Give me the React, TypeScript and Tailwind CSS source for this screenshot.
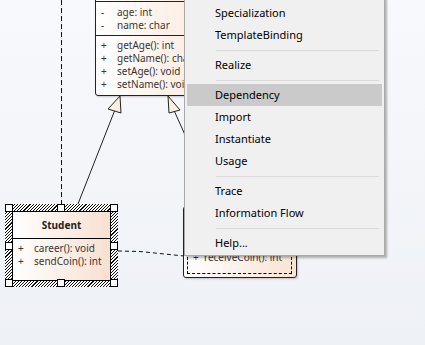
import React from 'react';

const font = "font-['Noto_Sans',sans-serif]";

type Item = { label: string; active?: boolean } | 'sep';

const menuItems: Item[] = [
  { label: 'Specialization' },
  { label: 'TemplateBinding' },
  'sep',
  { label: 'Realize' },
  'sep',
  { label: 'Dependency', active: true },
  { label: 'Import' },
  { label: 'Instantiate' },
  { label: 'Usage' },
  'sep',
  { label: 'Trace' },
  { label: 'Information Flow' },
  'sep',
  { label: 'Help...' },
];

const Row = ({ sign, text, w = 'w-[21px]' }: { sign: string; text: string; w?: string }) => (
  <div className="flex h-[13px] items-center whitespace-nowrap">
    <span className={`${w} pl-[5px]`}>{sign}</span>
    <span>{text}</span>
  </div>
);

const Handle = ({ className }: { className: string }) => (
  <div className={`absolute h-[8px] w-[8px] border border-black bg-white ${className}`} />
);

const Connectors = () => (
  <svg className="absolute inset-0" width="425" height="345" viewBox="0 0 425 345">
    {/* dependency from above */}
    <line x1="61.5" y1="0" x2="61.5" y2="204" stroke="#111" strokeWidth="1" strokeDasharray="5 3" />
    {/* generalization Student -> parent */}
    <line x1="76" y1="209" x2="114.5" y2="111" stroke="#222" strokeWidth="1" />
    <polygon points="120,96 108,109 121,113" fill="#fcefe2" stroke="#222" strokeWidth="1" />
    {/* second generalization */}
    <line x1="174.5" y1="111.5" x2="190" y2="146" stroke="#222" strokeWidth="1" />
    <polygon points="168,96 169,113 180,110" fill="#fcefe2" stroke="#222" strokeWidth="1" />
    {/* dashed link to receiveCoin class */}
    <polyline points="118,251 140,251.5 184,256" fill="none" stroke="#111" strokeWidth="1" strokeDasharray="4 3" />
  </svg>
);

export default function App() {
  return (
    <div className={`relative h-[345px] w-[425px] overflow-hidden bg-gradient-to-b from-[#f8f9fc] to-[#eef1f6] ${font}`}>
      <Connectors />

      {/* parent class (partly off screen) */}
      <div className="absolute left-[95px] top-[-21px] h-[117px] w-[150px] rounded-b-[3px] border border-[#222] bg-gradient-to-r from-white to-[#fae3d3] text-[10px] text-[#3a3430] shadow-[1px_1px_2px_rgba(0,0,0,0.2)]">
        <div className="h-[22px] border-b border-[#222]" />
        <div className="h-[34px] border-b border-[#222] pt-[4px]">
          <Row sign="-" text="age: int" />
          <Row sign="-" text="name: char" />
        </div>
        <div className="pt-[3px]">
          <Row sign="+" text="getAge(): int" />
          <Row sign="+" text="getName(): char" />
          <Row sign="+" text="setAge(): void" />
          <Row sign="+" text="setName(): void" />
        </div>
      </div>

      {/* Student (selected) */}
      <div className="absolute left-[5px] top-[204px] h-[83px] w-[113px] bg-[repeating-linear-gradient(135deg,#111_0,#111_0.8px,#fff_0.8px,#fff_2.2px)]">
        <div className="absolute left-[7px] top-[7px] h-[70px] w-[99px] border border-black bg-gradient-to-r from-white to-[#f8e0d0] text-[10px] text-[#3a3430]">
          <div className="flex h-[27px] items-center justify-center border-b border-black font-bold text-[#222]">
            Student
          </div>
          <div className="pt-[3px]">
            <Row sign="+" text="career(): void" />
            <Row sign="+" text="sendCoin(): int" />
          </div>
        </div>
        <Handle className="left-0 top-0" />
        <Handle className="left-[52px] top-0" />
        <Handle className="right-0 top-0" />
        <Handle className="left-0 top-[38px]" />
        <Handle className="right-0 top-[38px]" />
        <Handle className="bottom-0 left-0" />
        <Handle className="bottom-0 left-[52px]" />
        <Handle className="bottom-0 right-0" />
      </div>

      {/* receiver class (behind menu) */}
      <div className="absolute left-[183px] top-[206px] h-[72px] w-[114px] rounded-[3px] border border-[#222] bg-gradient-to-r from-white to-[#fae3d3] text-[10px] text-[#3a3430] shadow-[1px_1px_2px_rgba(0,0,0,0.2)]">
        <div className="absolute bottom-[3px] left-[3px] right-[4px] top-[36px] border border-dashed border-black pt-[7px]">
          <Row sign="+" text="receiveCoin(): int" w="w-[16px]" />
        </div>
      </div>

      {/* context menu */}
      <div className="absolute left-[184px] top-[-3px] w-[201px] border border-[#a9a9a9] bg-[#f0f0f0] pb-[1px] pt-[4px] text-[11px] text-black shadow-[2px_2px_2px_rgba(0,0,0,0.28)]">
        {menuItems.map((it, i) =>
          it === 'sep' ? (
            <div key={i} className="flex h-[8px] items-center pl-[31px] pr-[5px]">
              <div className="h-px w-full bg-[#dadada]" />
            </div>
          ) : (
            <div
              key={i}
              className={`mx-[2px] flex h-[22px] items-center pl-[28px] ${it.active ? 'bg-[#cacaca]' : ''}`}
            >
              {it.label}
            </div>
          ),
        )}
      </div>
    </div>
  );
}
